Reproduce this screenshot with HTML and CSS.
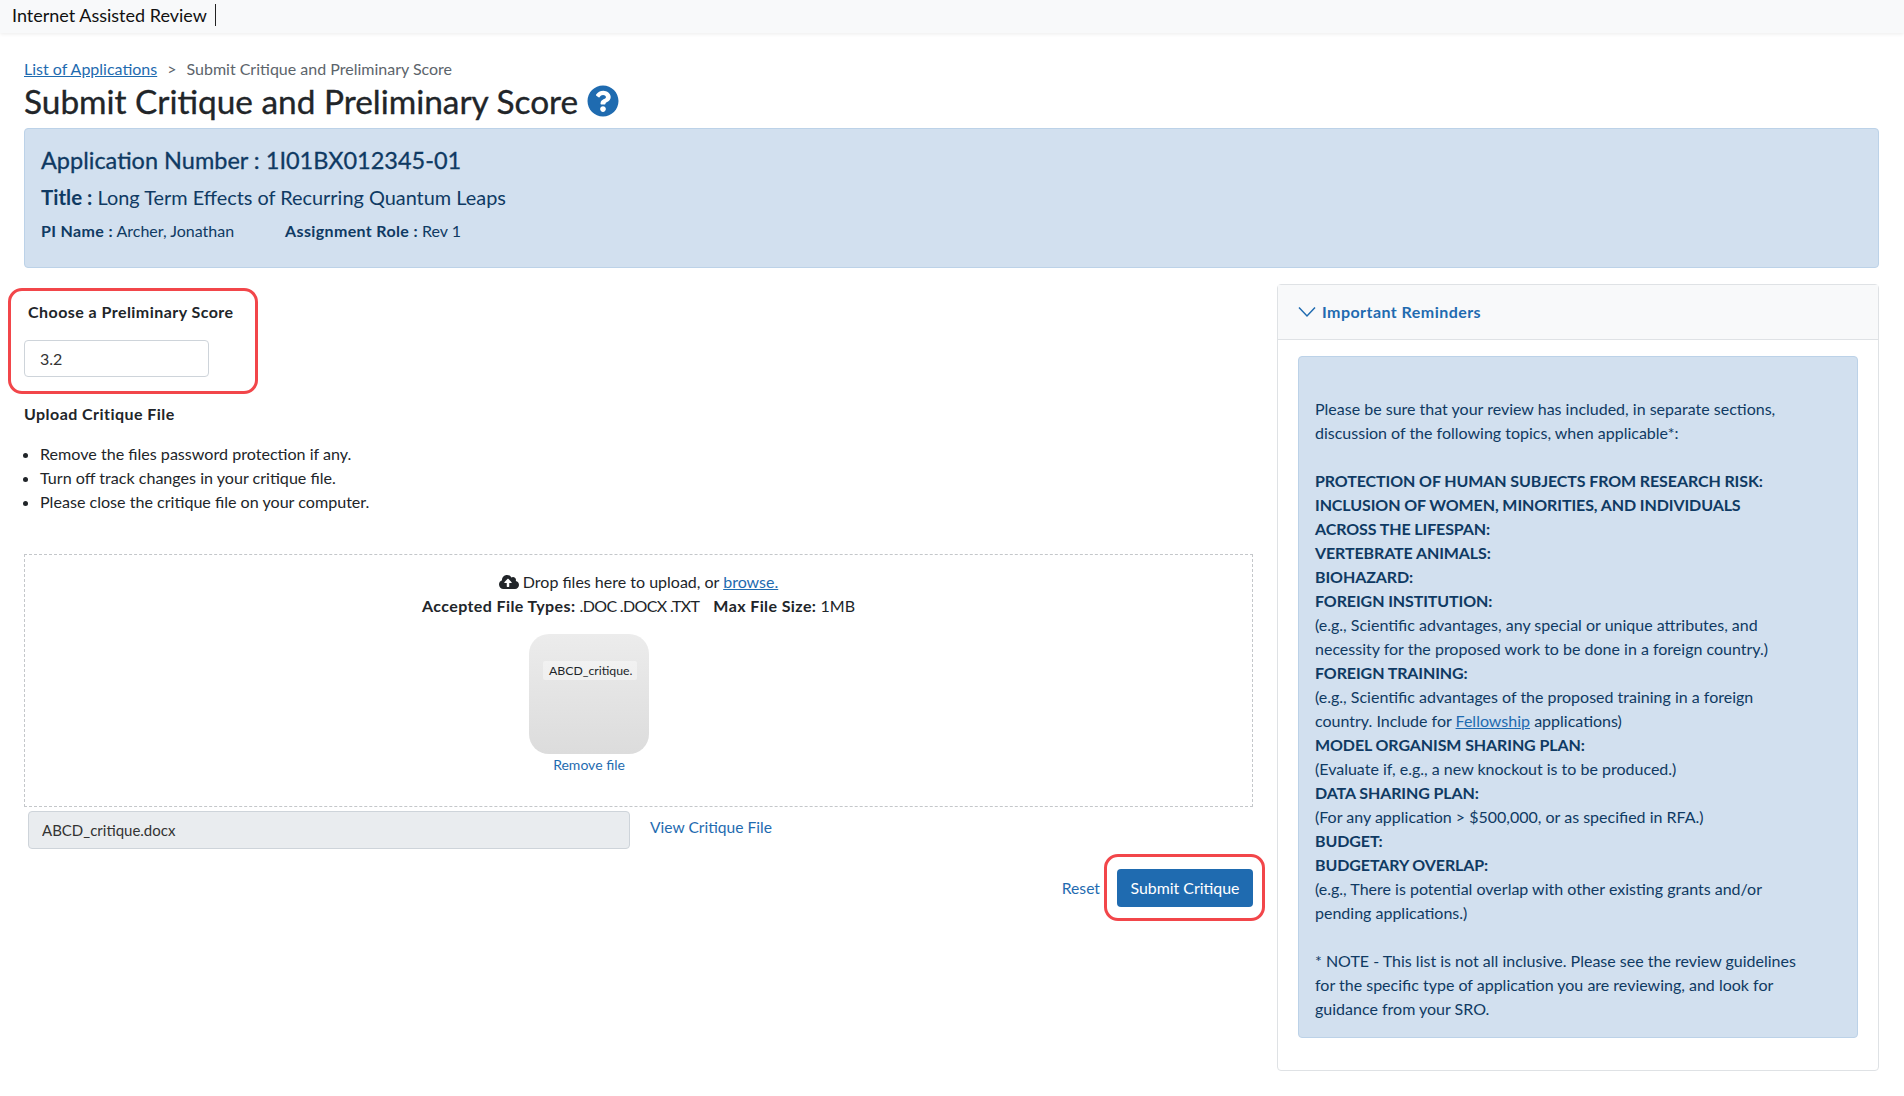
FILE: index.html
```html
<!DOCTYPE html>
<html lang="en">
<head>
<meta charset="utf-8">
<title>Submit Critique and Preliminary Score</title>
<link rel="stylesheet" href="styles.css">
</head>
<body>
<header class="topbar"><span class="brand">Internet Assisted Review</span></header>
<main class="page">
  <nav class="crumbs"><a href="#">List of Applications</a><span class="sep">&gt;</span><span>Submit Critique and Preliminary Score</span></nav>
  <h1 class="title">Submit Critique and Preliminary Score
    <svg class="help" viewBox="0 0 512 512" aria-hidden="true"><path d="M504 256c0 136.997-111.043 248-248 248S8 392.997 8 256C8 119.083 119.043 8 256 8s248 111.083 248 248zM262.655 90c-54.497 0-89.255 22.957-116.549 63.758-3.536 5.286-2.353 12.415 2.715 16.258l34.699 26.31c5.205 3.947 12.621 3.008 16.665-2.122 17.864-22.658 30.113-35.797 57.303-35.797 20.429 0 45.698 13.148 45.698 32.958 0 14.976-12.363 22.667-32.534 33.976C247.128 238.528 216 254.941 216 296v4c0 6.627 5.373 12 12 12h56c6.627 0 12-5.373 12-12v-1.333c0-28.462 83.186-29.647 83.186-106.667 0-58.002-60.165-102-116.531-102zM256 338c-25.365 0-46 20.635-46 46 0 25.364 20.635 46 46 46s46-20.636 46-46c0-25.365-20.635-46-46-46z"/></svg>
  </h1>
  <section class="info">
    <div class="info-num">Application Number : 1I01BX012345-01</div>
    <div class="info-title"><b>Title :</b> Long Term Effects of Recurring Quantum Leaps</div>
    <div class="info-meta"><span><b>PI Name :</b> Archer, Jonathan</span><span><b>Assignment Role :</b> Rev 1</span></div>
  </section>
  <div class="columns">
    <div class="left">
      <div class="score">
        <span class="callout callout-score"></span>
        <label class="score-label" for="score">Choose a Preliminary Score</label>
        <input class="score-input" id="score" value="3.2">
      </div>
      <div class="upload-title">Upload Critique File</div>
      <ul class="rules">
        <li>Remove the files password protection if any.</li>
        <li>Turn off track changes in your critique file.</li>
        <li>Please close the critique file on your computer.</li>
      </ul>
      <div class="drop">
        <div class="drop-line"><svg class="cloud" viewBox="0 0 640 512" aria-hidden="true"><path d="M537.6 226.6c4.1-10.7 6.4-22.4 6.4-34.6 0-53-43-96-96-96-19.7 0-38.1 6-53.3 16.2C367 64.2 315.3 32 256 32c-88.4 0-160 71.6-160 160 0 2.7.1 5.4.2 8.1C40.2 219.8 0 273.2 0 336c0 79.5 64.5 144 144 144h368c70.7 0 128-57.3 128-128 0-61.9-44-113.6-102.4-125.4zM393.4 288H328v112c0 8.8-7.2 16-16 16h-48c-8.8 0-16-7.2-16-16V288h-65.4c-14.3 0-21.4-17.2-11.3-27.3l105.4-105.4c6.2-6.2 16.4-6.2 22.6 0l105.4 105.4c10.1 10.1 2.9 27.3-11.3 27.3z"/></svg> Drop files here to upload, or <a href="#">browse.</a></div>
        <div class="drop-line"><b>Accepted File Types:</b> <span class="types">.DOC .DOCX .TXT</span> <b class="max">Max File Size:</b> 1MB</div>
        <div class="preview">
          <div class="thumb"><span class="chip">ABCD_critique.</span></div>
          <a class="remove" href="#">Remove file</a>
        </div>
      </div>
      <div class="file-row">
        <input class="file-name" value="ABCD_critique.docx" readonly>
        <a class="view" href="#">View Critique File</a>
      </div>
      <div class="actions">
        <a class="reset" href="#">Reset</a>
        <div class="submit-wrap">
          <span class="callout callout-submit"></span>
          <button class="submit" type="button">Submit Critique</button>
        </div>
      </div>
    </div>
    <aside class="panel">
      <div class="panel-head">
        <svg class="chev" viewBox="0 0 18 12" aria-hidden="true"><path d="M1 1.5 9 10l8-8.5"/></svg>
        <span>Important Reminders</span>
      </div>
      <div class="panel-body">
        <div class="note">
          <p>Please be sure that your review has included, in separate sections, discussion of the following topics, when applicable*:</p>
          <p><b>PROTECTION OF HUMAN SUBJECTS FROM RESEARCH RISK:<br>
          INCLUSION OF WOMEN, MINORITIES, AND INDIVIDUALS ACROSS THE LIFESPAN:<br>
          VERTEBRATE ANIMALS:<br>
          BIOHAZARD:<br>
          FOREIGN INSTITUTION:</b><br>
          (e.g., Scientific advantages, any special or unique attributes, and necessity for the proposed work to be done in a foreign country.)<br>
          <b>FOREIGN TRAINING:</b><br>
          (e.g., Scientific advantages of the proposed training in a foreign country. Include for <a href="#">Fellowship</a> applications)<br>
          <b>MODEL ORGANISM SHARING PLAN:</b><br>
          (Evaluate if, e.g., a new knockout is to be produced.)<br>
          <b>DATA SHARING PLAN:</b><br>
          (For any application &gt; $500,000, or as specified in RFA.)<br>
          <b>BUDGET:<br>
          BUDGETARY OVERLAP:</b><br>
          (e.g., There is potential overlap with other existing grants and/or pending applications.)</p>
          <p>* NOTE - This list is not all inclusive. Please see the review guidelines for the specific type of application you are reviewing, and look for guidance from your SRO.</p>
        </div>
      </div>
    </aside>
  </div>
</main>
</body>
</html>
```
FILE: styles.css
```css
* { box-sizing: border-box; }
html, body { margin: 0; padding: 0; }
body {
  font-family: "Lato", "Open Sans", "Liberation Sans", sans-serif;
  font-size: 16px;
  line-height: 24px;
  color: #212529;
  background: #fff;
}
a { color: #1f6bb0; text-decoration: none; }
.topbar {
  height: 33px;
  background: #f8f9fa;
  box-shadow: 0 1px 4px rgba(0,0,0,.08);
  padding: 4px 0 0 12px;
  display: flex;
  align-items: flex-start;
}
.brand {
  font-size: 18px;
  line-height: 22px;
  color: #111;
  padding-right: 8px;
  border-right: 1px solid #222;
}
.page { padding: 24px 25px 0 24px; }
.crumbs { height: 24px; color: #5c646b; }
.crumbs a { text-decoration: underline; }
.sep { margin: 0 10px; }
.title {
  margin: 0 0 7px;
  font-size: 33.4px;
  line-height: 40px;
  font-weight: 400;
  -webkit-text-stroke: .35px #212529;
  color: #212529;
  display: flex;
  align-items: center;
  gap: 9px;
}
.help { width: 32px; height: 32px; fill: #1f6bb0; }
.info {
  height: 140px;
  background: #d2e0ef;
  border: 1px solid #bcd2e8;
  border-radius: 4px;
  padding: 15px 16px 0;
  color: #0f3a63;
}
.info-num { font-size: 23.5px; line-height: 32px; -webkit-text-stroke: .3px #0f3a63; }
.info-title { font-size: 19.9px; line-height: 30px; margin-top: 6px; }
.info-title b { font-size: 20.5px; }
.info-meta { display: flex; gap: 51px; margin-top: 7px; line-height: 24px; }
.info-meta b { letter-spacing: .35px; }
.columns { display: grid; grid-template-columns: 1229px 602px; column-gap: 24px; margin-top: 16px; }
.left { display: flex; flex-direction: column; }
.score { position: relative; padding: 16px 0 0; height: 109px; }
.callout {
  position: absolute;
  border: 3px solid #f2464a;
  border-radius: 14px;
  pointer-events: none;
}
.callout-score { left: -16px; top: 4px; width: 250px; height: 106px; }
.score-label { display: block; font-weight: 700; letter-spacing: .45px; margin-left: 4px; color: #212529; }
.score-input {
  display: block;
  width: 185px;
  height: 37px;
  margin-top: 16px;
  padding: 0 15px;
  font: inherit;
  color: #333;
  background: #fff;
  border: 1px solid #ced4da;
  border-radius: 4px;
}
.upload-title { font-weight: 700; letter-spacing: .45px; margin-top: 9px; }
.rules { margin: 16px 0 0; padding-left: 16px; font-size: 16.1px; }
.rules li { line-height: 24px; }
.drop {
  margin-top: 40px;
  height: 253px;
  border: 1px dashed #c4c7ca;
  padding-top: 15px;
  display: flex;
  flex-direction: column;
  align-items: center;
}
.drop-line { line-height: 24px; }
.drop-line a { text-decoration: underline; }
.drop-line b { letter-spacing: .4px; }
.types { letter-spacing: -.65px; }
.cloud { width: 20px; height: 16px; fill: #212529; vertical-align: -2px; }
.max { margin-left: 10px; }
.preview { display: flex; flex-direction: column; align-items: center; margin-right: 99px; }
.thumb {
  width: 120px;
  height: 120px;
  margin-top: 16px;
  border-radius: 20px;
  background: linear-gradient(#ececec, #dcdcdc);
  padding: 27px 0 0 14px;
}
.chip {
  display: block;
  width: 94px;
  height: 19px;
  padding-left: 6px;
  background: rgba(255,255,255,.4);
  border-radius: 2px;
  font-size: 12.3px;
  line-height: 19px;
  white-space: nowrap;
  overflow: hidden;
}
.remove { font-size: 14px; line-height: 20px; margin-top: 1px; }
.file-row { display: flex; align-items: flex-start; margin-top: 4px; padding-left: 4px; }
.file-name {
  width: 602px;
  height: 38px;
  padding: 0 13px;
  font: inherit;
  font-size: 15px;
  color: #333;
  background: #e9ecef;
  border: 1px solid #ced4da;
  border-radius: 4px;
}
.view { margin: 4px 0 0 20px; font-size: 15.6px; }
.actions { display: flex; justify-content: flex-end; align-items: center; gap: 17px; margin-top: 20px; }
.reset { font-size: 15.7px; }
.submit-wrap { position: relative; }
.callout-submit { left: -13px; top: -15px; width: 161px; height: 67px; }
.submit {
  display: block;
  width: 136px;
  height: 38px;
  font: inherit;
  font-size: 15.9px;
  color: #fff;
  background: #1f6bb0;
  border: 0;
  border-radius: 4px;
}
.panel {
  height: 787px;
  border: 1px solid #dfe2e5;
  border-radius: 4px;
}
.panel-head {
  height: 55px;
  background: #f8f9fa;
  border-bottom: 1px solid #dfe2e5;
  padding-left: 20px;
  display: flex;
  align-items: center;
  gap: 6px;
  color: #1f6bb0;
  font-weight: 700;
  letter-spacing: .45px;
}
.chev { width: 18px; height: 12px; fill: none; stroke: #1f6bb0; stroke-width: 1.5; }
.panel-body { padding: 16px 20px 0; }
.note {
  height: 682px;
  background: #d2e0ef;
  border: 1px solid #bcd2e8;
  border-radius: 4px;
  padding: 40px 54px 0 16px;
  color: #0f3a63;
}
.note p { margin: 0 0 24px; }
.note a { text-decoration: underline; }
.note b { letter-spacing: -.1px; }
```
